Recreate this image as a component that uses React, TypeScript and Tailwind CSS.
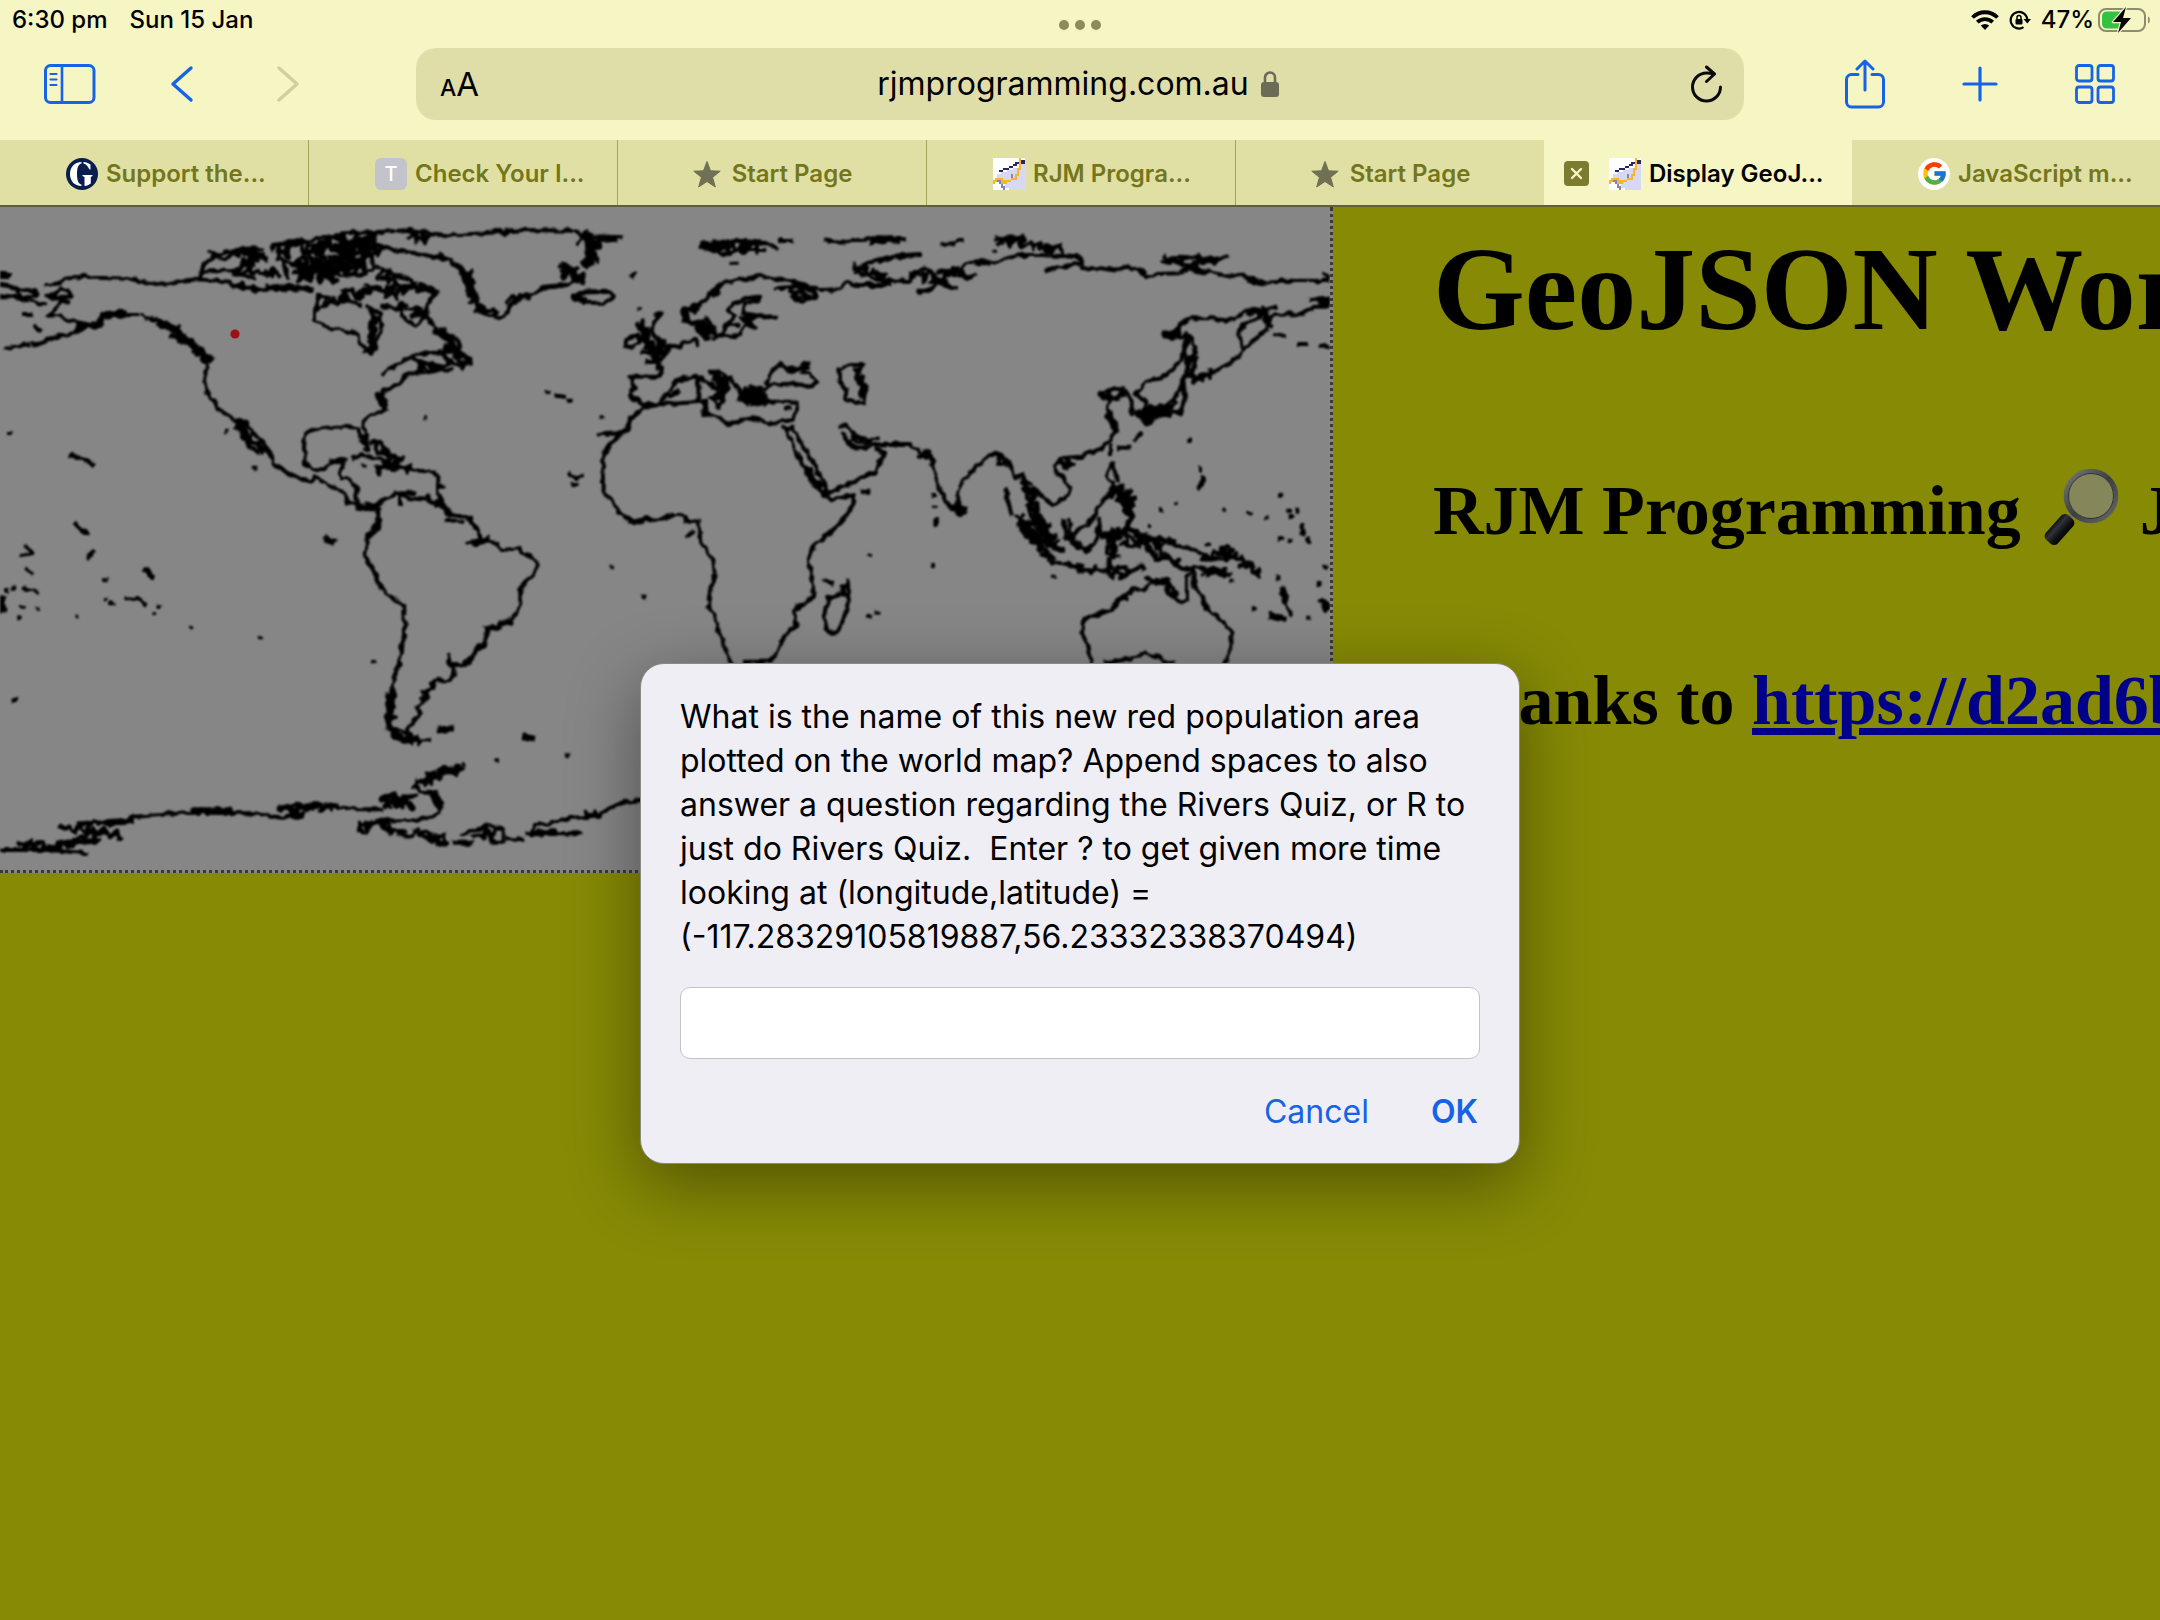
import React from "react";
import { FcGoogle } from "react-icons/fc";

/* ---------- world map ---------- */

type Pt = [number, number];

// Rough archipelago outline: zigzags around the centre line through the points.
function rough(points: Pt[], spread: number, steps: number, seed = 1) {
  let s = seed * 7919 + 13;
  const rnd = () => {
    s = (s * 16807) % 2147483647;
    return s / 2147483647 - 0.5;
  };
  let d = "";
  for (let i = 0; i < points.length - 1; i++) {
    const [ax, ay] = points[i];
    const [bx, by] = points[i + 1];
    for (let k = 0; k < steps; k++) {
      const t = k / steps;
      const x = ax + (bx - ax) * t + rnd() * spread;
      const y = ay + (by - ay) * t + rnd() * spread;
      d += `${d ? "L" : "M"}${x.toFixed(0)} ${y.toFixed(0)}`;
    }
  }
  return d;
}

const dots = (pts: Pt[]) => pts.map(([x, y]) => `M${x} ${y}h2`).join("");

interface Region {
  transform: string;
  lines: string;
  thick?: string;
  islands: Pt[];
  clusters: string[];
}

const regions: Region[] = [
  {
    transform: "translate(0 200) scale(0.33333)",
    lines:
      "M140 255L180 250L195 237L230 232L260 225L280 233L400 236L420 243L480 254L540 243L590 238L690 245L710 262L800 268L850 266L935 270" +
      "M0 222H30M0 232H25M0 255L25 258L60 268L100 272L115 283L90 290L60 295L50 270M0 285L40 290L80 303L130 312M0 292H30" +
      "M140 287L165 285L180 265L205 272L215 290L140 290L205 305L180 310L160 335L145 350L180 348L200 360L240 368L275 375L290 365L310 340L360 335L375 345L410 345M425 345L435 355M445 355L480 362L500 375" +
      "M15 443L50 437L85 433M100 433L125 430L160 413L190 405L220 400L240 385L270 380L300 378L310 350M72 345H88M103 378L117 388" +
      "M625 470L620 500L612 540L620 575L640 600L655 628L690 650L715 670L735 700L770 735L810 755L822 790L850 812L900 835L935 842L945 832L985 855L1025 870L1045 905L1080 920L1130 915L1155 895L1190 880L1240 880" +
      "M715 660L740 665L750 690L790 725L800 745M715 690L740 720L745 740L775 755" +
      "M1075 685L1040 680L1005 680L945 688L915 700L912 745L915 790L935 808L975 808L1000 785L1035 775L1020 810L1020 835L1055 840L1068 860L1070 905" +
      "M1075 690L1085 715L1100 740L1105 700L1090 680L1092 660L1115 645L1150 630L1160 605L1140 590L1155 570L1200 550L1225 520L1270 520L1310 510L1350 490" +
      "M1060 775L1090 765L1130 775L1160 790L1200 800L1260 812L1300 815L1315 830L1315 880L1330 910L1350 945M1115 730L1140 725L1170 760L1200 780M1130 800L1140 820" +
      "M1080 920L1100 930L1135 925L1135 985L1100 1020M1190 880L1230 895L1290 900L1320 915L1350 945M1200 880V910M975 1010L1000 1018" +
      "M1150 520L1180 500L1215 480L1250 462L1350 455M1240 475L1280 490L1330 500M955 300L945 330L945 365L980 382L1030 392L1075 402L1080 430L1115 460L1125 420L1145 395L1140 340L1125 330M955 325L990 310L1040 300L1080 315" +
      "M1130 200L1180 220L1230 240L1260 270L1310 275L1280 310L1280 350L1310 385L1350 420M1150 320L1200 325L1215 360L1245 375L1275 350L1260 330" +
      "M600 235L610 195L640 170L700 150L785 148M610 215L700 210L760 235M820 135L890 125L940 120L1030 100L1150 95L1230 90L1350 108M1130 135L1180 150L1250 160L1350 180M215 768L250 778L280 798M225 970L260 998M990 780L1020 790",
    thick: "M480 372L520 385L550 415L590 445L632 478M240 380L300 372M320 345L370 342M1115 370V445M1310 395L1350 418M1030 110L1050 180",
    islands: [[27, 699], [681, 692], [764, 806], [1091, 799], [1273, 655], [228, 972]],
    clusters: [
      rough([[640, 175], [785, 160], [720, 205], [830, 215]], 36, 18, 2),
      rough([[710, 258], [820, 265], [930, 260]], 22, 14, 3),
      rough([[830, 155], [960, 140], [1110, 120]], 55, 34, 4),
      rough([[880, 200], [960, 200], [1100, 190]], 75, 34, 5),
      rough([[900, 240], [1040, 210], [1120, 140], [1040, 130], [1000, 200]], 50, 24, 6),
      rough([[960, 300], [1040, 285], [1130, 270], [1200, 290]], 45, 12, 7),
      rough([[1130, 215], [1200, 250], [1300, 275]], 45, 14, 8),
      rough([[1100, 320], [1125, 390], [1110, 450]], 40, 10, 9),
      rough([[1200, 320], [1275, 350]], 40, 12, 10),
      rough([[1225, 105], [1290, 120]], 30, 14, 11),
      rough([[1250, 500], [1340, 505]], 40, 12, 12),
      rough([[715, 675], [790, 745]], 34, 16, 13),
      rough([[1085, 700], [1100, 755]], 26, 10, 14),
      rough([[1120, 740], [1200, 785], [1140, 800], [1250, 805]], 24, 12, 15),
      rough([[520, 395], [630, 475]], 32, 22, 16),
      rough([[1080, 918], [1135, 920]], 22, 10, 17),
      rough([[1140, 585], [1155, 630]], 22, 10, 18),
      rough([[1290, 900], [1330, 915]], 22, 8, 19),
    ],
  },
  {
    transform: "translate(440 200) scale(0.33333)",
    lines:
      "M0 108L60 105L130 100L200 95L250 90L400 92L430 108L545 112M470 125L520 120M400 245L370 255L310 260L290 280L240 288L215 310L195 345L180 355L150 345L120 325L95 290L75 240L60 200L40 190L0 165" +
      "M400 290L420 278L500 275L525 290L490 308L430 308ZM575 232L585 222M0 385L55 420L60 455L95 490L40 495L0 455" +
      "M790 130L900 122L970 128L1010 145M800 145L850 165L900 150L970 150M1020 123H1055M875 188H890M1155 122L1210 125L1240 120L1350 118" +
      "M1350 170L1290 185L1250 220L1310 235L1350 250M1255 200L1300 185M1100 255L1060 245L1000 235L960 228L900 238L850 250L820 270L800 300L760 320L730 330L735 360L770 375L790 400L820 385L800 355L785 365" +
      "M820 415L850 395L860 375L885 350L865 330L880 310L920 295L955 290L950 302L915 310L910 340L960 348L1005 350L930 355L945 385L915 370L900 405L840 410L820 400M870 375L890 375" +
      "M1010 265L1060 260L1120 270L1130 290L1085 305L1055 290L1100 290M1060 248L1100 255L1140 270L1200 268L1220 245L1250 255L1350 255" +
      "M770 435L765 420L730 425L720 440L690 442L670 470L655 490L625 485M655 490L665 515L655 530L570 530L582 560L570 590L600 605L630 618L665 615L670 590L700 560L710 540L770 530L790 545" +
      "M810 515L835 515L870 535L890 560L900 590L930 605M820 540L860 570L850 595L835 620L815 595L845 590L830 565L800 545M775 545V600M685 588L715 575" +
      "M650 345L665 340L640 370L635 395L660 430L690 440L665 460L610 455M560 415L590 405L600 425L585 440L555 440Z" +
      "M605 628L570 655L565 685L530 710L510 735L490 765L490 800L492 840L490 880L520 905L535 935L580 965L620 955L655 960L700 945L725 945L745 965L775 965L780 1020M475 703L540 700" +
      "M605 628L640 615L740 608L790 605L795 640L840 655L870 675L900 660L940 655L990 670L1060 660L1070 620L1070 605L980 605L960 610" +
      "M975 570L985 555L1060 550L1110 560L1135 545L1100 520L1085 520L1105 490L1060 515L1035 505L1020 490L990 520L980 550M1035 625H1050" +
      "M1270 495L1230 495L1195 510L1200 545L1220 570L1215 595L1245 605L1270 608L1280 560L1255 540L1250 515L1265 505" +
      "M1035 685L1055 720L1070 760L1090 800L1120 850L1150 880M1060 690L1090 740L1120 790L1155 850L1160 880L1230 850L1305 815L1335 760L1310 745M1150 885L1175 898L1245 885L1230 930L1200 975L1145 1020M1265 875H1285" +
      "M1200 680L1220 675L1240 705L1285 720L1310 715M1210 700L1240 745L1275 745L1300 735L1350 732M350 587L375 590M390 820L405 835L425 830M400 852H410M0 895L35 945L90 955L115 990L125 1020M745 1008L755 998M1030 683H1060",
    thick: "M85 225L95 280M445 130L450 190M735 330L740 360M790 135L860 145M1300 122L1350 117M795 605V640M1265 545V585M405 290L430 300M920 580L960 600",
    islands: [[595, 328], [323, 576], [390, 602], [485, 655], [5, 860]],
    clusters: [
      rough([[70, 210], [95, 250], [100, 300], [160, 345]], 32, 14, 21),
      rough([[420, 110], [465, 130], [455, 185], [430, 200]], 40, 12, 22),
      rough([[370, 210], [430, 235]], 50, 22, 23),
      rough([[165, 95], [210, 98]], 18, 10, 24),
      rough([[200, 300], [270, 285]], 18, 10, 25),
      rough([[800, 138], [970, 140]], 36, 28, 26),
      rough([[780, 375], [810, 405]], 46, 26, 27),
      rough([[605, 370], [620, 430], [665, 450]], 40, 22, 28),
      rough([[640, 470], [655, 495]], 34, 12, 29),
      rough([[920, 585], [980, 590]], 60, 34, 30),
      rough([[820, 520], [860, 550], [840, 590]], 34, 12, 31),
      rough([[20, 430], [75, 485]], 44, 16, 32),
      rough([[1055, 510], [1110, 495]], 22, 8, 33),
      rough([[740, 335], [770, 320], [850, 255]], 20, 12, 34),
      rough([[1250, 200], [1340, 235]], 26, 12, 35),
      rough([[1060, 285], [1120, 285]], 28, 12, 36),
      rough([[910, 350], [940, 380]], 30, 12, 37),
      rough([[1225, 720], [1310, 725]], 24, 10, 38),
      rough([[1245, 500], [1275, 580]], 22, 14, 39),
      rough([[1095, 800], [1150, 870]], 24, 12, 40),
      rough([[600, 615], [665, 615]], 16, 10, 41),
    ],
  },
  {
    transform: "translate(880 200) scale(0.33333)",
    lines:
      "M0 115L75 118M190 132L220 130M230 123H245M345 115L430 110M0 185L40 170L120 165M0 240L90 243L105 215L140 205L160 225L165 255L140 275L115 275M165 245L230 265M180 210L270 235" +
      "M175 215L240 210L265 185L320 190L380 175L420 165L490 165L600 172L610 205L660 205L710 212L740 198L780 208L800 230L830 222L900 220L920 205M500 212L550 200L600 190" +
      "M850 185L900 170L1020 178L1040 168M920 205L980 215L1050 230L1080 222L1110 235L1140 245L1230 242L1345 243M1330 225L1345 232" +
      "M1290 300L1345 292M1345 320L1300 320L1260 342L1180 345L1165 370L1160 390L1130 415L1095 445L1075 470L1050 490L1010 510L970 530L940 545" +
      "M1185 320L1150 335L1090 335L1070 355L1040 362L1000 355L930 355L900 375L880 395L855 405L880 415L920 405L910 440L905 475L870 515L840 535L800 545L765 580L800 610L790 640M1140 350L1090 375L1078 400L1085 440" +
      "M930 410L915 450L925 510L905 550M930 410L945 440L935 480L950 470L935 520L945 540M910 540L915 590L900 640L860 635L800 670L780 640M905 560L880 600L840 630L800 640M1185 400L1215 410M1260 432H1280M1320 440H1345" +
      "M755 645L755 600L735 570L700 565L660 580L690 600L680 630L695 660L705 690L690 720L665 745L600 770L545 775L525 795L530 820L555 835L570 870L555 895L520 915L490 890L460 865M560 795H580M720 743H745M765 720L785 700M690 740V765" +
      "M695 790L680 830L700 850M700 790L710 840M690 880L655 920L640 955L600 985L570 1010M745 920L755 950L740 1000M655 960L665 1015M550 965L560 1015" +
      "M0 732L90 732L130 765L155 775L165 820L185 880L205 920L235 915L235 870L250 840L290 800L330 765L365 765L385 790L405 835L430 825L440 880L460 930L490 960L510 1010M235 915L258 930L245 945L232 940ZM0 757L12 770L0 790M380 865L382 900L395 940" +
      "M167 960V975M445 880L455 870L480 890M410 950L450 970L500 1000M415 975L450 1015M963 805V812M970 835L955 865M1268 975V1005M770 990L780 1015L870 1018",
    thick: "M0 116L50 118M290 188H320M1115 242L1145 248M855 405H885M800 645L850 638M1325 305H1345M685 1008H715M480 985L510 1010M690 650L705 690M210 918L245 930M700 865L740 900",
    islands: [[343, 155], [157, 885], [165, 920], [928, 720], [885, 908], [843, 930], [808, 975], [1033, 932], [1107, 940], [1158, 955], [1200, 887], [1225, 932], [1250, 932], [1235, 948], [1200, 1018], [1285, 1018]],
    clusters: [
      rough([[365, 125], [440, 130], [545, 152]], 32, 18, 51),
      rough([[100, 225], [160, 240], [220, 215], [280, 225]], 34, 10, 52),
      rough([[860, 185], [930, 190], [1010, 178]], 30, 14, 53),
      rough([[1110, 338], [1180, 345]], 30, 12, 54),
      rough([[780, 640], [820, 640], [870, 620]], 42, 18, 55),
      rough([[670, 580], [740, 580]], 32, 14, 56),
      rough([[700, 860], [735, 890], [745, 940]], 50, 22, 57),
      rough([[670, 1005], [720, 1000]], 30, 12, 58),
      rough([[915, 470], [935, 530]], 24, 10, 59),
      rough([[125, 755], [160, 790]], 28, 8, 60),
      rough([[330, 770], [400, 800]], 22, 10, 61),
      rough([[540, 790], [580, 795]], 30, 8, 62),
      rough([[440, 850], [460, 940], [500, 990]], 34, 12, 63),
      rough([[410, 960], [450, 1010], [510, 1005]], 34, 10, 64),
      rough([[950, 540], [1000, 515]], 22, 8, 65),
      rough([[870, 405], [900, 385]], 26, 10, 66),
      rough([[1155, 330], [1165, 385]], 18, 8, 67),
    ],
  },
  {
    transform: "translate(0 520) scale(0.41454 0.33333)",
    lines:
      "M915 0L888 45L885 90L880 110L900 150L920 205L945 235L975 255L977 350L968 380L965 430L950 470L947 510M990 660L1035 658M1130 0L1150 25L1160 55L1130 70M1160 60L1200 70L1210 90L1250 85L1300 130L1280 170L1255 205L1255 250L1240 290L1220 310L1175 328L1170 375L1140 400L1125 435L1085 435L1082 405" +
      "M1095 440L1098 465L1085 480L1050 482L1045 505L1020 515L1035 530L1005 560L1015 580L980 630M350 255L335 238L305 235M215 115L225 95M180 12L205 38M65 80L78 100L50 105M65 150L78 162M60 205L92 215" +
      "M0 990L120 990L210 1000M190 910L300 905L320 890L390 885L410 878L620 880L650 890L725 890M670 865L720 855L820 862L850 868L920 868M1010 815L1050 815L1065 850L1060 880L1040 892L1000 900L910 902" +
      "M1095 968H1135M1115 945L1180 915L1215 930L1215 965L1185 965L1180 935L1140 950M1225 958H1260M1275 940H1400M1280 940L1290 915L1330 910L1380 893L1440 890L1470 865L1510 845L1568 836M1080 0L1115 5M1520 5L1550 8",
    thick: "M947 515L938 570L938 620L950 645L990 665M1062 627H1084M1268 652L1282 656M353 153L365 165M4 240L7 270M793 60L800 64M255 908L312 904M468 872H550M1145 68L1175 60M1287 938H1335M1045 825L1058 855",
    islands: [[1367, 703], [1197, 725], [900, 426], [628, 355], [459, 325], [1474, 140], [1550, 230], [33, 538], [33, 546], [182, 290], [44, 292], [90, 265], [53, 260], [253, 181], [253, 238], [270, 250], [382, 258], [370, 280], [15, 213], [32, 203], [1117, 732]],
    clusters: [
      rough([[50, 970], [130, 980], [230, 960]], 30, 18, 71),
      rough([[145, 925], [285, 942], [150, 980]], 30, 18, 72),
      rough([[190, 912], [310, 904]], 18, 16, 73),
      rough([[680, 862], [810, 862]], 26, 24, 74),
      rough([[700, 880], [725, 888]], 18, 8, 75),
      rough([[930, 840], [1000, 845]], 52, 28, 76),
      rough([[990, 800], [1050, 765], [1110, 745]], 34, 18, 77),
      rough([[855, 920], [950, 925], [1050, 955], [1080, 970]], 34, 14, 78),
      rough([[1150, 930], [1210, 945]], 34, 10, 79),
      rough([[1405, 885], [1445, 880]], 22, 10, 80),
      rough([[1120, 440], [1170, 370]], 16, 10, 81),
      rough([[940, 520], [945, 630], [1020, 665]], 20, 14, 82),
      rough([[1180, 325], [1240, 300]], 14, 10, 83),
      rough([[1020, 540], [1050, 490]], 16, 8, 84),
    ],
  },
  {
    transform: "translate(640 520) scale(0.44643 0.33333)",
    lines:
      "M0 2H20M100 2L130 5L135 60L160 110L168 160L155 230L152 260L165 275L178 340L205 430M455 0L390 75L378 120L385 170L390 230L345 270L350 320L325 345L310 390L290 425L235 425M108 48L118 35" +
      "M465 185L470 230L455 300L440 340L420 335L413 295L422 235L450 220L465 190M413 180L430 190M905 40L940 90M960 0L965 70L1000 95L1020 70L1030 0M1050 120V160M1160 70L1170 110L1190 120L1215 150L1240 140L1290 155L1320 165M1190 70L1240 90L1280 115L1310 120M1095 0L1080 40" +
      "M1438 205L1445 240L1457 280M662 2V14M1010 430L1005 380L990 340L995 300L1020 285L1055 270L1075 235L1110 205L1130 210L1145 180L1185 180L1180 220L1215 250L1225 240L1225 170L1240 150L1240 200L1260 230L1270 265L1300 300L1325 335L1325 380L1310 430M1045 430L1100 415L1130 400L1160 410L1170 425H1195",
    thick: "M1060 35V110M1415 288L1440 296M1527 245L1537 262M1440 210L1445 240M1305 85L1315 115",
    islands: [[513, 105], [654, 135], [515, 290], [530, 278], [927, 170], [8, 230], [1325, 182], [1428, 175], [1375, 268], [1497, 293], [1520, 192], [1535, 140], [1433, 60], [1455, 60], [1482, 20], [1482, 38], [1497, 65], [1140, 18], [1270, 75]],
    clusters: [
      rough([[850, 5], [880, 60], [920, 115]], 28, 16, 91),
      rough([[880, 10], [940, 85]], 34, 22, 92),
      rough([[915, 115], [1000, 145], [1130, 150]], 26, 16, 93),
      rough([[1050, 40], [1060, 115]], 30, 16, 94),
      rough([[1050, 168], [1105, 160]], 20, 12, 95),
      rough([[1090, 60], [1190, 72]], 40, 26, 96),
      rough([[1110, 30], [1120, 80]], 18, 8, 97),
      rough([[1150, 90], [1220, 140]], 34, 12, 98),
      rough([[1270, 110], [1310, 90], [1345, 125], [1395, 168]], 24, 12, 99),
      rough([[1270, 160], [1320, 155]], 30, 14, 100),
      rough([[1140, 185], [1185, 185], [1200, 235]], 20, 10, 101),
      rough([[455, 195], [468, 230]], 16, 8, 102),
      rough([[1065, 250], [1120, 205]], 18, 10, 103),
      rough([[970, 60], [1010, 95]], 22, 8, 104),
    ],
  },
];

function WorldMap() {
  return (
    <svg
      viewBox="0 207 1330 663"
      width="1330"
      height="663"
      className="block"
      role="img"
      aria-label="World map with one red population area"
    >
      <defs>
        <filter id="soft" x="0" y="0" width="100%" height="100%">
          <feTurbulence type="fractalNoise" baseFrequency="0.14" numOctaves="1" seed="4" result="n" />
          <feDisplacementMap in="SourceGraphic" in2="n" scale="7" xChannelSelector="R" yChannelSelector="G" />
          <feGaussianBlur stdDeviation="0.9" />
        </filter>
      </defs>
      <rect x="0" y="207" width="1330" height="663" fill="#868686" />
      <g filter="url(#soft)" fill="none" stroke="#050505" strokeLinejoin="round" strokeLinecap="square">
        <rect x="0" y="207" width="1330" height="663" stroke="none" />
        {regions.map((r) => (
          <g key={r.transform} transform={r.transform}>
            <path d={r.lines} strokeWidth="4" vectorEffect="non-scaling-stroke" />
            {r.thick && <path d={r.thick} strokeWidth="7" vectorEffect="non-scaling-stroke" />}
            <path d={dots(r.islands)} strokeWidth="4" vectorEffect="non-scaling-stroke" />
            {r.clusters.map((c, i) => (
              <path key={i} d={c} strokeWidth="4" vectorEffect="non-scaling-stroke" />
            ))}
          </g>
        ))}
      </g>
      <circle cx="235" cy="334" r="4.6" fill="#9c1016" />
    </svg>
  );
}

/* ---------- icons ---------- */

const blue = "#1763e6";

function SidebarIcon() {
  return (
    <svg width="52" height="40" viewBox="0 0 52 40" fill="none" stroke={blue} strokeWidth="3">
      <rect x="1.5" y="1.5" width="48.5" height="37" rx="5" />
      <path d="M18 2v36" strokeWidth="2.6" />
      <path d="M6.500 10h6M6.500 15.500h6M6.500 21h6" strokeWidth="2.2" strokeLinecap="round" />
    </svg>
  );
}

function Chevron({ flip }: { flip?: boolean }) {
  return (
    <svg width="24" height="38" viewBox="0 0 24 38" fill="none" strokeLinecap="round" strokeLinejoin="round" strokeWidth="3.4" stroke={flip ? "#cfcfa2" : blue}>
      <path d={flip ? "M3 3l18 16L3 35" : "M21 3L3 19l18 16"} />
    </svg>
  );
}

function LockIcon() {
  return (
    <svg width="18" height="28" viewBox="0 0 18 28">
      <path d="M4 13V7.500a5 5 0 0 1 10 0V13" fill="none" stroke="#6c6b57" strokeWidth="2.600" />
      <rect x="0" y="12" width="18" height="15" rx="3" fill="#6c6b57" />
    </svg>
  );
}

function ReloadIcon() {
  return (
    <svg width="32" height="38" viewBox="0 0 32 38" fill="none" stroke="#0a0a0a" strokeWidth="3" strokeLinecap="round" strokeLinejoin="round">
      <path d="M29.500 22A14 14 0 1 1 15.500 8c2.600 0 5 .2 7 1" />
      <path d="M15.500 2l8 7-8 7.500" />
    </svg>
  );
}

function ShareIcon() {
  return (
    <svg width="40" height="50" viewBox="0 0 40 50" fill="none" stroke={blue} strokeWidth="3" strokeLinecap="round" strokeLinejoin="round">
      <path d="M13 15.500H6.500a5 5 0 0 0-5 5V43a5 5 0 0 0 5 5h27a5 5 0 0 0 5-5V20.500a5 5 0 0 0-5-5H27" />
      <path d="M20 31V2.500M12 10l8-8 8 8" />
    </svg>
  );
}

function PlusIcon() {
  return (
    <svg width="36" height="36" viewBox="0 0 36 36" stroke={blue} strokeWidth="3.200" strokeLinecap="round">
      <path d="M18 2v32M2 18h32" />
    </svg>
  );
}

function GridIcon() {
  return (
    <svg width="40" height="40" viewBox="0 0 40 40" fill="none" stroke={blue} strokeWidth="2.800">
      <rect x="1.500" y="1.500" width="15.500" height="15.500" rx="2.500" />
      <rect x="23" y="1.500" width="15.500" height="15.500" rx="2.500" />
      <rect x="1.500" y="23" width="15.500" height="15.500" rx="2.500" />
      <rect x="23" y="23" width="15.500" height="15.500" rx="2.500" />
    </svg>
  );
}

function WifiIcon() {
  return (
    <svg width="28" height="20" viewBox="0 0 28 20" fill="none" stroke="#000" strokeWidth="3.800">
      <path d="M1.500 7.500a17.500 17.500 0 0 1 25 0" />
      <path d="M6.300 12.200a11 11 0 0 1 15.400 0" />
      <path d="M14 20l-4.200-4.400a6 6 0 0 1 8.400 0z" fill="#000" stroke="none" />
    </svg>
  );
}

function RotationLockIcon() {
  return (
    <svg width="22" height="20" viewBox="0 0 22 20" fill="none" stroke="#000" strokeWidth="2.200">
      <path d="M14.500 17.200A8.300 8.300 0 1 1 18.300 10" />
      <path d="M14.500 9h7.500l-3.700 4.500z" fill="#000" stroke="none" />
      <rect x="6.500" y="9" width="7" height="5.600" rx="1" fill="#000" stroke="none" />
      <path d="M8 9.500V7.500a2 2 0 0 1 4 0v2" strokeWidth="1.500" />
    </svg>
  );
}

function BatteryIcon() {
  return (
    <svg width="54" height="26" viewBox="0 0 54 26">
      <rect x="1" y="2" width="46" height="22" rx="7" fill="none" stroke="#8c8d6c" strokeWidth="2" />
      <path d="M50 9.500c2.500.8 2.500 6.200 0 7z" fill="#8c8d6c" />
      <path d="M8.500 4.500H25v17H8.500a4.500 4.500 0 0 1-4.500-4.500V9a4.500 4.500 0 0 1 4.500-4.500z" fill="#34c245" />
      <path d="M28 0L15 15h8l-3 11 13-15h-8z" fill="#000" stroke="#f5f6c4" strokeWidth="2.400" paintOrder="stroke" strokeLinejoin="round" />
    </svg>
  );
}

function GuardianIcon() {
  return (
    <svg width="32" height="32" viewBox="0 0 32 32">
      <circle cx="16" cy="16" r="16" fill="#0a1d50" />
      <path d="M15.500 4C8.500 4 4 9 4 16s4.500 12 11.500 12V26.500c-3-.5-4.500-4-4.500-10.500S12.500 6 15.500 5.400z" fill="#fff" />
      <path d="M17.500 4c3 .3 5.500 1.400 7 2.600v5h-1c-1.400-3-3.200-5.500-6-6.200zM16.500 17h10v1l-1.700 1v6.400c-1.600 1.200-4 2.300-6.300 2.600V19l-2-1z" fill="#fff" />
    </svg>
  );
}

function LetterIcon() {
  return (
    <span className="flex size-8 items-center justify-center rounded-md bg-[#c3c3cb] text-xl font-medium text-white">T</span>
  );
}

function StarIcon() {
  return (
    <svg width="32" height="32" viewBox="1 0 32 32">
      <path d="M16 3.500l3.500 9.300 9.700.4-7.600 6.100 2.700 9.700-8.300-5.500-8.300 5.500 2.700-9.700-7.600-6.100 9.700-.4z" fill="#6f7054" stroke="#6f7054" strokeLinejoin="round" />
    </svg>
  );
}

function ChartIcon() {
  return (
    <svg width="32" height="32" viewBox="0 0 16 16" shapeRendering="crispEdges">
      <path d="M0 0h16v16H0z" fill="#fff" />
      <path d="M2 8h2V7h3V6h3V5h3V3h3v13H8v-1H6v-2H4v-2H2z" fill="#d9d8f4" />
      <path d="M3 6h2v1H3zM5 5h3v1H5zM8 4h2v1H8zM10 3h2v1h-2zM11 2h3v1h-3zM14 1h2v2h-2z" fill="#2a2664" />
      <path d="M0 11h1v2H0zM1 10h2v2H1zM3 10h2v1H3zM4 11h3v2H4zM7 11h2v1H7zM9 10h2v1H9zM11 8h1v3h-1zM12 5h1v4h-1zM13 0h1v6h-1z" fill="#f7b52a" />
      <path d="M2 11h2v1H2zM3 12h1v1H3zM4 13h1v2H4zM5 14h1v2H5zM9 8h1v2H9z" fill="#7f86b8" />
    </svg>
  );
}

function GoogleIcon() {
  return (
    <span className="flex size-8 items-center justify-center rounded-full bg-white">
      <FcGoogle size={27} />
    </span>
  );
}

function MagnifierIcon() {
  return (
    <svg width="84" height="84" viewBox="0 0 84 84" className="inline-block overflow-visible align-baseline" role="img" aria-label="magnifying glass">
      <defs>
        <linearGradient id="rim" x1="0" y1="0" x2="1" y2="1">
          <stop offset="0" stopColor="#77797c" />
          <stop offset="0.5" stopColor="#3c3e42" />
          <stop offset="1" stopColor="#68696c" />
        </linearGradient>
        <linearGradient id="grip" x1="0" y1="0" x2="1" y2="0">
          <stop offset="0" stopColor="#101113" />
          <stop offset="0.3" stopColor="#303236" />
          <stop offset="0.7" stopColor="#101113" />
          <stop offset="1" stopColor="#050505" />
        </linearGradient>
      </defs>
      <g transform="translate(0 17)">
        <path d="M35 47l-7 7" stroke="#6a6b6e" strokeWidth="5" />
        <rect x="13.500" y="46" width="16" height="33" rx="5" fill="url(#grip)" transform="rotate(42 21.500 62.500)" />
        <circle cx="53" cy="29" r="25" fill="#85865a" stroke="url(#rim)" strokeWidth="4.500" />
        <circle cx="53" cy="29" r="22.500" fill="none" stroke="#2f3134" strokeWidth="1" />
      </g>
    </svg>
  );
}

/* ---------- browser chrome ---------- */

function StatusBar() {
  return (
    <div className="grid h-10 grid-cols-3 items-center text-[24px] leading-none font-medium">
      <div className="flex gap-[22px] pl-3">
        <span>6:30 pm</span>
        <span>Sun 15 Jan</span>
      </div>
      <div className="flex justify-center gap-1.5 pt-2.5">
        <span className="size-2.5 rounded-full bg-[#8b8c5a]" />
        <span className="size-2.5 rounded-full bg-[#8b8c5a]" />
        <span className="size-2.5 rounded-full bg-[#8b8c5a]" />
      </div>
      <div className="flex items-center justify-end pr-2">
        <WifiIcon />
        <span className="ml-2.5">
          <RotationLockIcon />
        </span>
        <span className="mr-1 ml-2.5">47%</span>
        <BatteryIcon />
      </div>
    </div>
  );
}

function Toolbar() {
  return (
    <div className="grid h-[100px] grid-cols-[416px_1fr_416px] items-start pt-2">
      <div className="flex h-[72px] items-center pl-11">
        <button type="button" aria-label="Show sidebar">
          <SidebarIcon />
        </button>
        <button type="button" aria-label="Back" className="ml-[74px]">
          <Chevron />
        </button>
        <button type="button" aria-label="Forward" className="ml-[82px]" disabled>
          <Chevron flip />
        </button>
      </div>
      <div className="grid h-[72px] grid-cols-[80px_1fr_80px] items-center rounded-[20px] bg-[#dfdea9]">
        <button type="button" aria-label="Page settings" className="flex items-baseline pl-6 leading-none">
          <span className="text-[23px] font-medium">A</span>
          <span className="text-[33px]">A</span>
        </button>
        <button type="button" className="flex items-center justify-center gap-3 pr-1 text-[32px] leading-none">
          <span>rjmprogramming.com.au</span>
          <LockIcon />
        </button>
        <button type="button" aria-label="Reload" className="flex justify-end pr-[21px]">
          <ReloadIcon />
        </button>
      </div>
      <div className="flex h-[72px] items-center justify-between pr-[45px] pl-[101px]">
        <button type="button" aria-label="Share">
          <ShareIcon />
        </button>
        <button type="button" aria-label="New tab">
          <PlusIcon />
        </button>
        <button type="button" aria-label="Tab overview">
          <GridIcon />
        </button>
      </div>
    </div>
  );
}

interface TabData {
  title: string;
  icon: React.ReactNode;
  active?: boolean;
  short?: boolean;
}

const tabs: TabData[] = [
  { title: "Support the...", icon: <GuardianIcon /> },
  { title: "Check Your I...", icon: <LetterIcon /> },
  { title: "Start Page", icon: <StarIcon />, short: true },
  { title: "RJM Progra...", icon: <ChartIcon /> },
  { title: "Start Page", icon: <StarIcon />, short: true },
  { title: "Display GeoJ...", icon: <ChartIcon />, active: true },
  { title: "JavaScript m...", icon: <GoogleIcon /> },
];

function Tab({ tab, divider }: { tab: TabData; divider: boolean }) {
  return (
    <div
      className={`flex min-w-0 flex-1 items-center pt-0.5 text-[24px] font-semibold ${
        tab.active ? "bg-[#f5f6c4] text-black" : "bg-[#e0e0a4] text-[#74761c]"
      } ${divider ? "border-r border-[#a3a45c]" : ""} ${tab.short ? "justify-center" : ""}`}
    >
      {tab.active ? (
        <button type="button" aria-label="Close tab" className="mr-5 ml-5 flex size-[25px] items-center justify-center rounded bg-[#7b7c30]">
          <svg width="13" height="13" viewBox="0 0 13 13" stroke="#f5f6c4" strokeWidth="2.400" strokeLinecap="round">
            <path d="M2 2l9 9M11 2l-9 9" />
          </svg>
        </button>
      ) : null}
      <button
        type="button"
        className={`flex items-center gap-2 whitespace-nowrap ${tab.active || tab.short ? "" : "ml-[66px]"}`}
      >
        {tab.icon}
        <span>{tab.title}</span>
      </button>
    </div>
  );
}

function PromptDialog() {
  return (
    <form
      role="dialog"
      aria-labelledby="prompt-text"
      onSubmit={(e) => e.preventDefault()}
      className="w-[880px] rounded-3xl border border-[#8a8a80] bg-[#efeef5] px-[39px] pt-[31px] pb-[22px] text-black shadow-[0_20px_70px_rgba(0,0,0,0.4)]"
    >
      <label id="prompt-text" htmlFor="answer" className="block text-[32px] leading-[44px] whitespace-pre">
        {"What is the name of this new red population area\nplotted on the world map? Append spaces to also\nanswer a question regarding the Rivers Quiz, or R to\njust do Rivers Quiz.  Enter ? to get given more time\nlooking at (longitude,latitude) =\n(-117.28329105819887,56.23332338370494)"}
      </label>
      <input
        id="answer"
        type="text"
        className="mt-7 block h-[72px] w-full rounded-[10px] border border-[#c3c3c8] bg-white px-4 text-[32px] outline-none"
      />
      <div className="mt-6 flex h-[58px] items-center justify-end gap-[62px] pr-0.5 text-[32px] text-[#1763e6]">
        <button type="button">Cancel</button>
        <button type="submit" className="font-semibold">
          OK
        </button>
      </div>
    </form>
  );
}

export default function App() {
  return (
    <div className="flex min-h-screen w-full flex-col overflow-hidden bg-[#868a05] font-['Inter',sans-serif] text-black">
      <header className="bg-[#f5f6c4]">
        <StatusBar />
        <Toolbar />
        <nav aria-label="Open tabs" className="flex h-[67px] border-b-2 border-[#5f6034]">
          {tabs.map((tab, i) => (
            <Tab key={i} tab={tab} divider={i < 4} />
          ))}
        </nav>
      </header>
      <main className="relative flex flex-1 items-start">
        <div className="shrink-0 border-r-3 border-b-3 border-dotted border-[#3a3a30] bg-[#868686]">
          <WorldMap />
        </div>
        <article className="min-w-0 flex-1 overflow-hidden pl-[100px] font-['Liberation_Serif',serif] font-bold whitespace-nowrap">
          <h1 className="mt-[15px] text-[118px] leading-[136px]">GeoJSON World</h1>
          <h2 className="mt-[92px] text-[70px] leading-[120px]">
            RJM Programming <MagnifierIcon /> J
          </h2>
          <p className="mt-[70px] text-[70px] leading-[120px]">
            Thanks to{" "}
            <a href="https://d2ad6b4ur7yvpq.cloudfront.net" className="text-[#00008b] underline">
              https://d2ad6b
            </a>
          </p>
        </article>
        <div className="absolute inset-0 flex items-center justify-center">
          <PromptDialog />
        </div>
      </main>
    </div>
  );
}
